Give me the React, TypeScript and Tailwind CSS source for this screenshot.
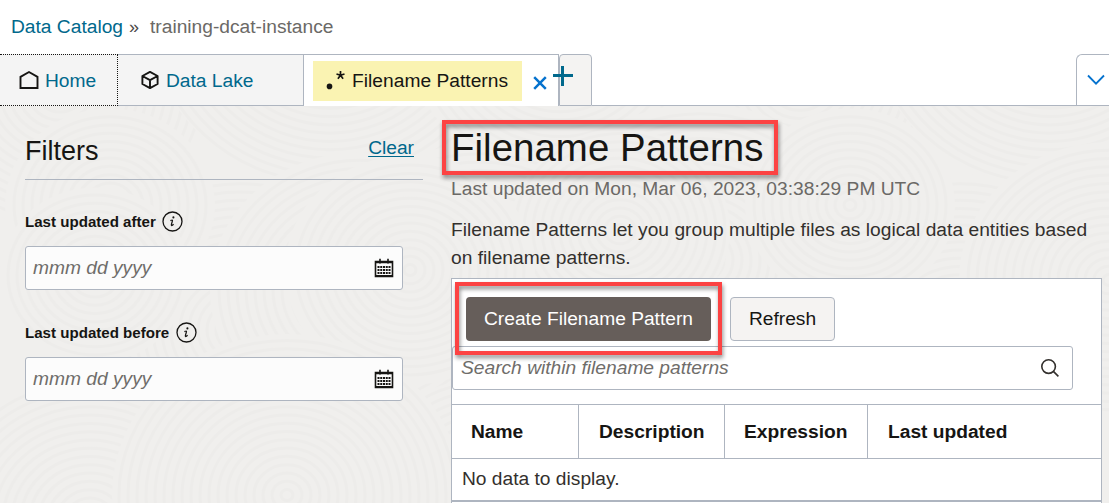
import React from "react";

const swirls: [number, number, number][] = [
  [60, 90, 150], [330, 20, 180], [560, 40, 150], [800, 80, 150], [1050, 20, 180],
  [240, 330, 170], [700, 260, 170], [960, 330, 170], [480, 300, 170],
  [110, 205, 105], [360, 290, 150], [620, 230, 110], [850, 205, 105], [1109, 280, 150],
  [95, 275, 95], [410, 270, 125], [90, 520, 160], [480, 480, 110], [287, 495, 175],
];

function Texture() {
  return (
    <svg className="pointer-events-none absolute inset-0 h-full w-full" viewBox="0 106 1109 397" preserveAspectRatio="none" aria-hidden="true">
      {swirls.map(([x, y, r], i) => (
        <g key={i} fill="none" stroke="#edecea" strokeWidth="3">
          <ellipse cx={x} cy={y} rx={r} ry={r * 0.92} fill="#f0efed" stroke="none" />
          {Array.from({ length: Math.floor(r / 9) }, (_, n) => (
            <ellipse key={n} cx={x} cy={y} rx={(n + 1) * 9 - 3} ry={((n + 1) * 9 - 3) * 0.92} />
          ))}
        </g>
      ))}
    </svg>
  );
}

function HomeIcon() {
  return (
    <svg className="h-5 w-5 shrink-0" viewBox="0 0 20 20" fill="none" stroke="#161513" strokeWidth="1.9">
      <path d="M1.5 18V6.9L10 2l8.5 4.9V18z" />
    </svg>
  );
}

function CubeIcon() {
  return (
    <svg className="h-5 w-5 shrink-0" viewBox="0 0 20 20" fill="none" stroke="#161513" strokeWidth="1.9" strokeLinejoin="round">
      <path d="M10 1.9 17.6 6v8L10 18.1 2.4 14V6zM2.4 6 10 10.2 17.6 6M10 10.2v8" />
    </svg>
  );
}

function InfoIcon() {
  return (
    <svg className="h-[21px] w-[21px]" viewBox="0 0 21 21" fill="none">
      <circle cx="10.5" cy="10.5" r="9.5" stroke="#161513" strokeWidth="1.3" />
      <circle cx="11.4" cy="6.4" r="1.05" fill="#161513" />
      <path d="M8.4 9.6c1-.5 1.7-.8 2-.5.4.2-.1 1.3-.5 2.5-.5 1.5-.9 2.7-.3 2.9.4.1 1.3-.5 2-1.2" stroke="#161513" strokeWidth="1.3" />
    </svg>
  );
}

function CalendarIcon() {
  return (
    <svg className="h-5 w-5" viewBox="0 0 20 20" fill="none" stroke="#161513">
      <path d="M1.5 3.5h17v15h-17z" strokeWidth="1.6" />
      <path d="M1 4.2h18M1 18.1h18" strokeWidth="2" />
      <path d="M6 .8v4.6M14 .8v4.6" strokeWidth="1.6" />
      <path d="M3.5 9h13M3.5 12h13M3.5 15h13" strokeWidth="1.8" strokeDasharray="2 .75" />
    </svg>
  );
}

function DateField({ label, className, iconGap }: { label: string; className: string; iconGap: string }) {
  return (
    <div className={className}>
      <div className={"flex h-[21px] items-center " + iconGap}>
        <span className="text-[15.1px] leading-[21px] font-bold whitespace-nowrap">{label}</span>
        <InfoIcon />
      </div>
      <div className="mt-[14px] flex h-[44px] w-[378px] items-center justify-between rounded-[3px] border border-[#aeb5c0] bg-[#fcfcfc] pr-[8px] pl-[7px]">
        <span className="text-[19.2px] leading-6 text-[#6f6d6a] italic">mmm dd yyyy</span>
        <CalendarIcon />
      </div>
    </div>
  );
}

export default function App() {
  return (
    <div className="relative flex h-[503px] w-[1109px] flex-col overflow-hidden bg-white font-['Liberation_Sans',Arial,sans-serif] text-[19.2px] text-[#161513]">
      <nav className="flex h-[54px] shrink-0 items-center pl-[11px] leading-[54px]">
        <a className="text-[#00688c]">Data Catalog</a>
        <span className="ml-[6px] text-[18px] text-[#4d4a47]">»</span>
        <span className="ml-[11px] text-[#6b6966]">training-dcat-instance</span>
      </nav>

      <div className="flex h-[52px] shrink-0">
        <div className="flex w-[118px] items-center gap-[6px] border-t border-r border-b border-dotted border-[#161513] bg-[#f4f4f4] pl-[19px] text-[#00688c]">
          <HomeIcon />
          <span className="pt-[2px]">Home</span>
        </div>
        <div className="flex w-[186px] items-center gap-[6px] border border-l-0 border-[#aeb5c0] bg-[#f4f4f4] pl-[22px] text-[#00688c]">
          <CubeIcon />
          <span className="pt-[2px]">Data Lake</span>
        </div>
        <div className="flex w-[255px] border-t border-r border-[#aeb5c0] bg-white pl-[9px]">
          <div className="mt-[6px] flex h-[40px] w-[209px] items-center bg-[#faf3b2]">
            <svg className="ml-[12px] h-6 w-[21px]" viewBox="0 0 21 24" fill="#161513">
              <circle cx="4.5" cy="17.4" r="2.8" />
              <path d="M15.5 6.3V2M15.5 6.3l-4-1.3M15.5 6.3l4-1.3M15.5 6.3l-2.6 3.5M15.5 6.3l2.6 3.5" stroke="#161513" strokeWidth="1.7" fill="none" />
            </svg>
            <span className="ml-[6px] tracking-[0.02px]">Filename Patterns</span>
          </div>
          <svg className="mt-[21px] ml-[11px] h-[14px] w-[14px]" viewBox="0 0 14 14" fill="none" stroke="#0572ce" strokeWidth="2.5">
            <path d="m1.2 1.2 11.6 11.6M12.8 1.2 1.2 12.8" />
          </svg>
        </div>
        <div className="relative w-[33px] rounded-t-[4px] border border-[#aeb5c0] bg-[#f4f3f2]">
          <svg className="absolute top-[11px] -left-[7px] h-5 w-5" viewBox="0 0 20 20" stroke="#00688c" strokeWidth="3">
            <path d="M0 9.5h20M9.5 0v20" />
          </svg>
        </div>
        <div className="flex-1 border-b border-[#aeb5c0]" />
        <div className="flex w-[33px] items-center rounded-tl-[6px] border-t border-b border-l border-[#aeb5c0] pl-[10px]">
          <svg className="h-3 w-[18px]" viewBox="0 0 18 12" fill="none" stroke="#0572ce" strokeWidth="1.8">
            <path d="m1 1.5 8 8.2 8-8.2" />
          </svg>
        </div>
      </div>

      <div className="relative h-[397px] shrink-0 bg-[#f0efed]">
        <Texture />
        <div className="relative flex h-full">
          <aside className="w-[451px] shrink-0 pl-[25px]">
            <div className="flex h-[74px] w-[398px] justify-between border-b border-[#aeb5c0] pr-[9px]">
              <h2 className="mt-[29px] text-[27px] leading-[32px]">Filters</h2>
              <a className="mt-[30px] leading-6 text-[#00688c] underline decoration-1 underline-offset-[2px]">Clear</a>
            </div>
            <DateField label="Last updated after" className="mt-[31px]" iconGap="gap-[6px]" />
            <DateField label="Last updated before" className="mt-[32px]" iconGap="gap-[7px]" />
          </aside>
          <main className="w-[651px] shrink-0">
            <h1 className="pt-[18px] text-[38.4px] leading-[48px] tracking-[0.05px]">Filename Patterns</h1>
            <p className="mt-[5px] leading-[24px] tracking-[0.02px] whitespace-nowrap text-[#6b6966]">Last updated on Mon, Mar 06, 2023, 03:38:29 PM UTC</p>
            <p className="mt-[15px] leading-[28px] tracking-[0.02px] text-[#33302d]">
              <span className="block whitespace-nowrap">Filename Patterns let you group multiple files as logical data entities based</span>
              <span className="block">on filename patterns.</span>
            </p>
            <section className="mt-[6px] h-[240px] border border-b-0 border-[#aeb5c0] bg-white">
              <div className="flex gap-[19px] pt-[18px] pl-[14px]">
                <button className="h-[44px] w-[245px] rounded-[4px] bg-[#665e5a] text-white">Create Filename Pattern</button>
                <button className="h-[44px] w-[105px] rounded-[4px] border border-[#aeb5c0] bg-[#f5f3f2]">Refresh</button>
              </div>
              <div className="mt-[5px] flex h-[44px] w-[621px] items-center justify-between rounded-[3px] border border-[#aeb5c0] pr-[12px] pl-[8px]">
                <span className="text-[#6f6d6a] italic">Search within filename patterns</span>
                <svg className="h-5 w-5" viewBox="0 0 20 20" fill="none" stroke="#33302d" strokeWidth="1.6">
                  <circle cx="8.6" cy="8.6" r="6.8" />
                  <path d="m13.4 13.4 5 5" />
                </svg>
              </div>
              <div className="mt-[14px] flex h-[55px] items-stretch border-y border-[#aeb5c0] leading-[53px] font-bold">
                <div className="w-[127px] border-r border-[#aeb5c0] pl-[19px]">Name</div>
                <div className="w-[146px] border-r border-[#aeb5c0] pl-[20px]">Description</div>
                <div className="w-[143px] border-r border-[#aeb5c0] pl-[19px]">Expression</div>
                <div className="pl-[20px]">Last updated</div>
              </div>
              <div className="h-[43px] border-b-2 border-[#aeb5c0] pl-[10px] leading-[40px] text-[#33302d]">No data to display.</div>
            </section>
          </main>
        </div>
      </div>

      <div className="absolute top-[120px] left-[442px] h-[55px] w-[336px] border-4 border-[#fc4343] drop-shadow-[1px_3px_2px_rgba(0,0,0,0.45)]" />
      <div className="absolute top-[282px] left-[455px] h-[73px] w-[267px] border-4 border-[#fc4343] drop-shadow-[1px_3px_2px_rgba(0,0,0,0.45)]" />
    </div>
  );
}
